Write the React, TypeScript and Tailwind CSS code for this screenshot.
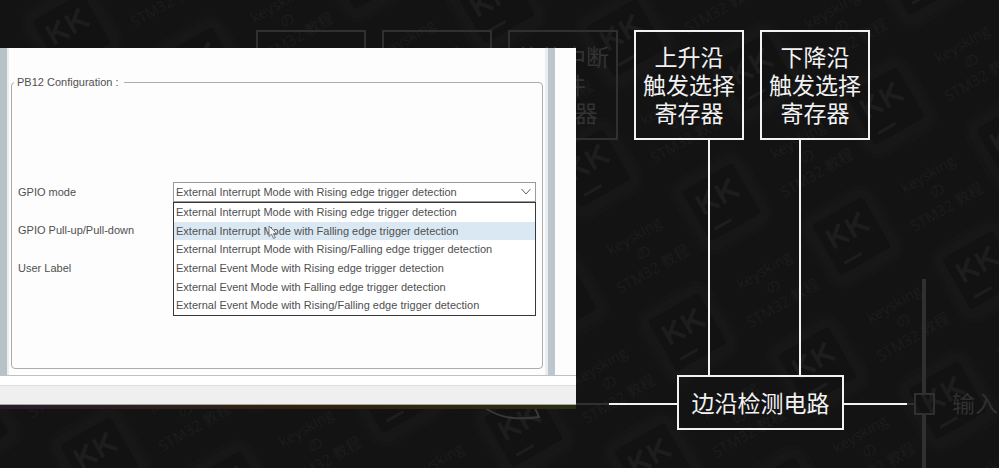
import { useState } from 'react';

const MODES = [
  'External Interrupt Mode with Rising edge trigger detection',
  'External Interrupt Mode with Falling edge trigger detection',
  'External Interrupt Mode with Rising/Falling edge trigger detection',
  'External Event Mode with Rising edge trigger detection',
  'External Event Mode with Falling edge trigger detection',
  'External Event Mode with Rising/Falling edge trigger detection',
];

// The wallpaper repeats one keycap and one caption on a tilted square lattice.
const CELLS: { x: number; y: number }[] = [];
for (let i = -9; i <= 4; i++) {
  for (let j = -4; j <= 5; j++) {
    const x = 848 + i * 130 - j * 34;
    const y = 230 + i * 34 + j * 130;
    if (x > -140 && x < 1100 && y > -100 && y < 560) CELLS.push({ x, y });
  }
}

function Wallpaper() {
  return (
    <svg className="absolute inset-0 h-full w-full" aria-hidden="true">
      {CELLS.map(({ x, y }) => (
        <g key={`${x},${y}`}>
          <g transform={`translate(${x} ${y}) rotate(-30)`}>
            <rect x="-43" y="-36" width="86" height="88" rx="20" fill="#151515" />
            <rect x="-38" y="-31" width="76" height="78" rx="14" fill="#171717" />
            <rect x="-29" y="-22" width="58" height="58" rx="4" fill="#121212" />
            <path
              d="M-19 -10V10M-5 -10L-18 1M-14 -2L-4 10M3 -10V10M18 -10L4 1M8 -2L19 10"
              stroke="#1d1d1d"
              strokeWidth="4"
              fill="none"
            />
            <path d="M-20 27H0" stroke="#1d1d1d" strokeWidth="3" />
          </g>
          <g
            transform={`translate(${x + 89} ${y - 40}) rotate(-30)`}
            fill="#1c1c1c"
            textAnchor="middle"
            fontSize="15"
            className="font-['Open_Sans','Noto_Sans_CJK_SC',sans-serif]"
          >
            <text x="0" y="-13">keysking</text>
            <text x="0" y="6">の</text>
            <text x="0" y="25">STM32 教程</text>
          </g>
        </g>
      ))}
    </svg>
  );
}

function Wires() {
  return (
    <svg className="absolute inset-0 h-full w-full" fill="none" strokeWidth="2" aria-hidden="true">
      <path d="M576 404H609M907 404H914" stroke="#303030" />
      <path d="M485 408Q499 417 513 418Q527 419 539 417L534 406" stroke="#383838" />
      <path d="M924 279V393M924 415V468" stroke="#303030" strokeWidth="4" />
      <rect x="915" y="394" width="19" height="20" stroke="#303030" />
      <path d="M709 139V376M800 139V376M609 404H678M843 404H907" stroke="#f2f2f2" />
    </svg>
  );
}

const NODE =
  "absolute flex flex-col items-center justify-center border-2 pb-0.5 text-[23px] leading-[28px] whitespace-nowrap font-['Noto_Sans_CJK_SC',sans-serif]";

function Diagram() {
  return (
    <div className="absolute inset-0">
      <Wires />
      <div className={`${NODE} top-[30px] left-[256px] size-[110px] border-[#303030]`} />
      <div className={`${NODE} top-[30px] left-[382px] size-[110px] border-[#303030]`} />
      <div className={`${NODE} top-[30px] left-[508px] size-[110px] border-[#303030] text-[#333333]`}>
        <span>软件中断</span>
        <span>事件</span>
        <span>寄存器</span>
      </div>
      <div className={`${NODE} top-[30px] left-[634px] size-[110px] border-[#f2f2f2] text-[#f2f2f2]`}>
        <span>上升沿</span>
        <span>触发选择</span>
        <span>寄存器</span>
      </div>
      <div className={`${NODE} top-[30px] left-[760px] size-[110px] border-[#f2f2f2] text-[#f2f2f2]`}>
        <span>下降沿</span>
        <span>触发选择</span>
        <span>寄存器</span>
      </div>
      <div className={`${NODE} top-[375px] left-[677px] h-[55px] w-[167px] border-[#f2f2f2] text-[#f2f2f2]`}>
        边沿检测电路
      </div>
      <div className="absolute top-[388px] left-[952px] font-['Noto_Sans_CJK_SC',sans-serif] text-[23px] leading-[28px] whitespace-nowrap text-[#303030]">
        输入
      </div>
    </div>
  );
}

function ModeField() {
  const [mode, setMode] = useState(0);
  return (
    <div className="relative z-10">
      <select
        id="gpio-mode"
        value={mode}
        onChange={(e) => setMode(Number(e.target.value))}
        className="block h-5 w-full appearance-none border border-[#9a9a9a] bg-white px-0.5 text-[#505050] outline-none"
      >
        {MODES.map((m, i) => (
          <option key={m} value={i}>{m}</option>
        ))}
      </select>
      <svg className="pointer-events-none absolute top-1.5 right-1 h-2 w-3" viewBox="0 0 12 8" fill="none" stroke="#606060" aria-hidden="true">
        <path d="M1.500 1L6 6L10.500 1" />
      </svg>
      <ul role="listbox" aria-label="GPIO mode" className="absolute inset-x-0 top-full grid h-[114px] grid-rows-6 border border-[#383838] bg-white">
        {MODES.map((m, i) => (
          <li
            key={m}
            role="option"
            aria-selected={i === mode}
            onClick={() => setMode(i)}
            className={`flex items-center px-0.5 whitespace-nowrap ${i === 1 ? 'bg-[#dae8f3]' : ''}`}
          >
            {m}
          </li>
        ))}
      </ul>
      <svg className="pointer-events-none absolute top-[43px] left-[95px] h-[15px] w-[10px]" viewBox="0 0 10 15" aria-hidden="true">
        <path d="M1 1V11.500L3.500 9.200L5.500 13.500L7.300 12.700L5.400 8.600H8.600Z" fill="#f4f8fb" stroke="#777" />
      </svg>
    </div>
  );
}

function ConfigPanel() {
  return (
    <section className="relative w-[576px] font-['Liberation_Sans',sans-serif] text-[11px] text-[#505050]">
      <div className="flex h-[328px] border-b border-[#b8c2c8] bg-[#fdfdfd]">
        <div className="w-[9px] border-l-[7px] border-[#b7c2c6] bg-[#e9eff2]" />
        <div className="flex flex-1 flex-col pt-[26px] pr-0.5 pb-1.5 pl-0.5">
          <fieldset className="flex-1 rounded border border-[#acacac] pr-1.5 pl-1.5">
            <legend className="-ml-1 pr-[5px] pl-[3px] leading-4">PB12 Configuration :</legend>
            <div className="grid grid-cols-[155px_1fr] items-center gap-y-[18px] pt-[92px]">
              <label htmlFor="gpio-mode">GPIO mode</label>
              <ModeField />
              <label htmlFor="gpio-pull">GPIO Pull-up/Pull-down</label>
              <select id="gpio-pull" className="h-5 w-full appearance-none border border-[#9a9a9a]" />
              <label htmlFor="user-label">User Label</label>
              <input id="user-label" className="h-5 w-full border border-[#9a9a9a]" />
            </div>
          </fieldset>
        </div>
        <div className="w-2.5 border-r-[7px] border-[#bcc6cc] bg-[#e9eef2]" />
        <div className="w-[21px]" />
      </div>
      <div className="h-[9px] bg-white" />
      <div className="h-5 border-y border-t-[#dddddd] border-b-[#a5a8a0] bg-[#efefef]" />
      <div className="h-1 bg-linear-to-r from-[#2b1b2b] via-[#33210f] to-[#2b2d12]" />
    </section>
  );
}

export default function App() {
  return (
    <main className="relative min-h-screen overflow-hidden bg-[#131313] pt-12">
      <Wallpaper />
      <Diagram />
      <ConfigPanel />
    </main>
  );
}
